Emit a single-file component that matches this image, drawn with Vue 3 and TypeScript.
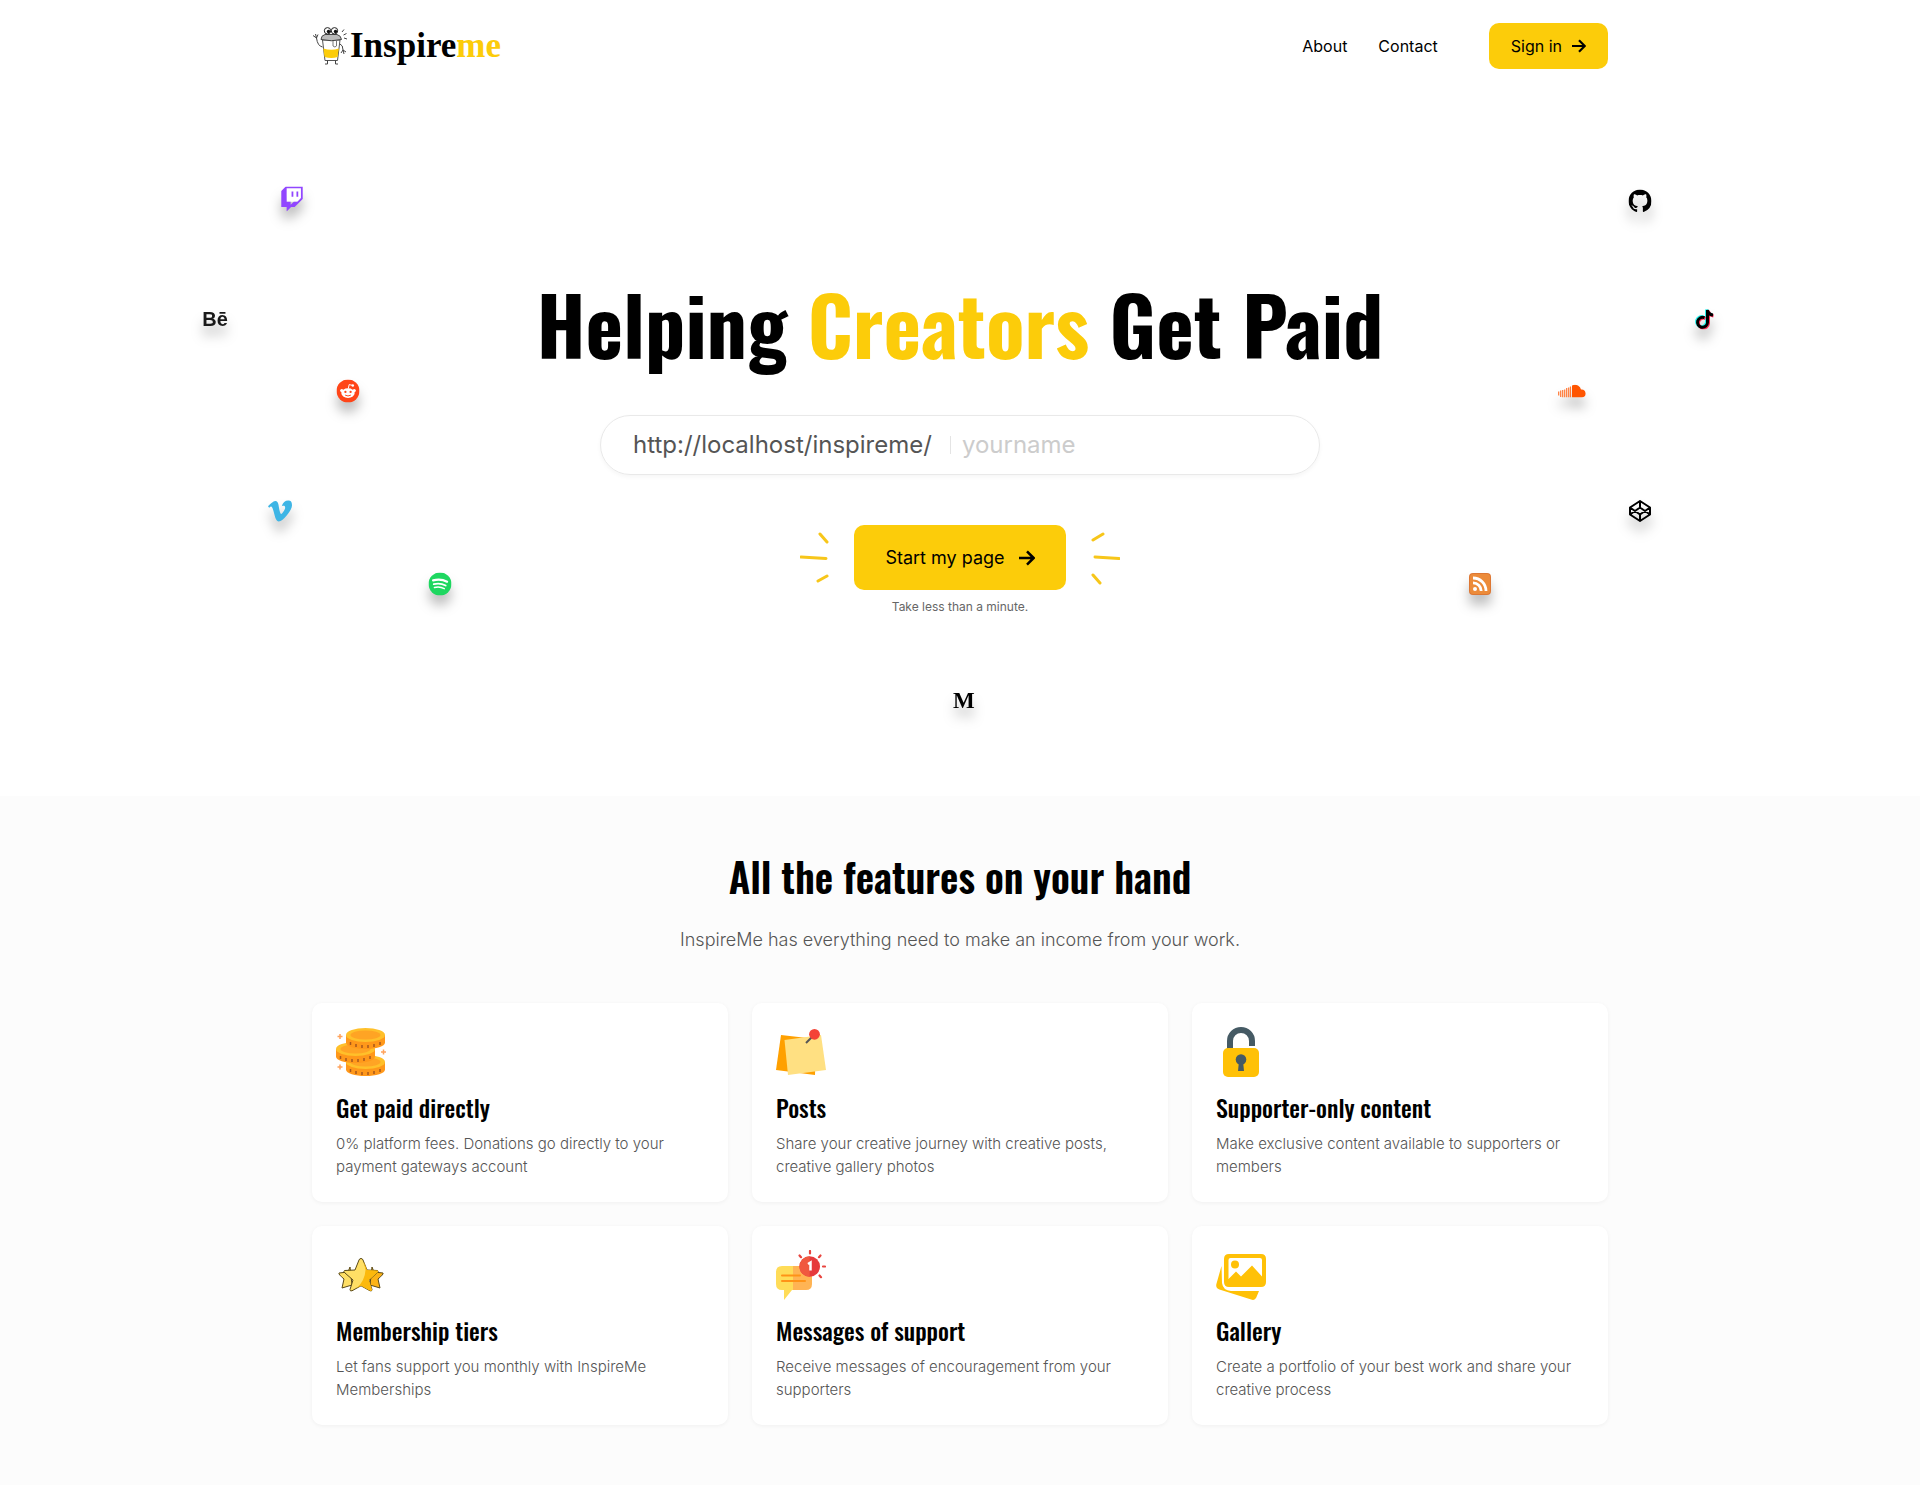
<script setup lang="ts">
import { ref } from 'vue'

interface Brand {
  name: string
  x: number
  y: number
}

interface Feature {
  icon: string
  title: string
  text: string
}

const pageName = ref('')

// x is the centre in thousandths of the hero's width, y the centre in pixels from its top
const brands: Brand[] = [
  { name: 'twitch', x: 152, y: 107 },
  { name: 'behance', x: 112, y: 227 },
  { name: 'reddit', x: 181, y: 299 },
  { name: 'vimeo', x: 146, y: 419 },
  { name: 'spotify', x: 229, y: 492 },
  { name: 'github', x: 854, y: 109 },
  { name: 'tiktok', x: 888, y: 227 },
  { name: 'soundcloud', x: 819, y: 299 },
  { name: 'codepen', x: 854, y: 419 },
  { name: 'rss', x: 771, y: 492 },
  { name: 'medium', x: 502, y: 609 },
]

const features: Feature[] = [
  { icon: 'coins', title: 'Get paid directly', text: '0% platform fees. Donations go directly to your payment gateways account' },
  { icon: 'notes', title: 'Posts', text: 'Share your creative journey with creative posts, creative gallery photos' },
  { icon: 'lock', title: 'Supporter-only content', text: 'Make exclusive content available to supporters or members' },
  { icon: 'stars', title: 'Membership tiers', text: 'Let fans support you monthly with InspireMe Memberships' },
  { icon: 'message', title: 'Messages of support', text: 'Receive messages of encouragement from your supporters' },
  { icon: 'gallery', title: 'Gallery', text: 'Create a portfolio of your best work and share your creative process' },
]

const coins = [
  { x: 10, y: 28 },
  { x: 0, y: 15 },
  { x: 10, y: 1 },
]
</script>

<template>
  <div class="page">
    <header class="container header">
      <a href="#" class="logo" aria-label="Inspireme">
        <svg class="mascot" viewBox="0 0 36 40" aria-hidden="true">
          <path d="M10.500 14l2.500 20.500h12.500L28 14z" fill="#fff" stroke="#555" />
          <path d="M11.300 22.500q8 2.500 15.500 0l-1.200 8.500q-6 2-13 0z" fill="#fccc0a" />
          <path d="M9 13.500q0-4 4-5h12q4 1 4.500 5q-10 2.500-20.500 0z" fill="#bbb" stroke="#444" />
          <circle cx="15.500" cy="4.800" r="3.200" fill="#fff" stroke="#222" />
          <circle cx="22.500" cy="4.800" r="3.200" fill="#fff" stroke="#222" />
          <circle cx="16.500" cy="5.500" r="1.700" fill="#111" />
          <circle cx="23.500" cy="5.500" r="1.700" fill="#111" />
          <path d="M21 15v5q2 2 3.500 0v-5" fill="#fff" stroke="#777" />
          <path d="M10.500 21q-5-1-6-9M4.500 12L1 9.500M4.500 12l-1-4M4.500 12L6 8.500M28 18q3 1 3 6l3 2M31 24l1 4M31 24l-2 3" fill="none" stroke="#444" />
          <path d="M15.500 34.500v3.500h-2.500M23.500 34.500v3.500h2.500M30 6l2-2.500M31.500 9l3-1.500M32 12l3 1" fill="none" stroke="#444" />
        </svg>
        <span class="wordmark">Inspire<em>me</em></span>
      </a>
      <nav class="nav">
        <a href="#">About</a>
        <a href="#">Contact</a>
        <a href="#" class="signin">
          Sign in
          <svg viewBox="0 0 14 14" width="14" height="14" aria-hidden="true">
            <path d="M0 7h12.500M7 1.200L12.800 7L7 12.800" fill="none" stroke="#000" stroke-width="2.200" />
          </svg>
        </a>
      </nav>
    </header>

    <main>
      <section class="hero">
        <h1>Helping <span>Creators</span> Get Paid</h1>
        <form class="claim" @submit.prevent>
          <div class="field">
            <label for="page-name">http://localhost/inspireme/</label>
            <span class="divider"></span>
            <input id="page-name" v-model="pageName" type="text" placeholder="yourname" />
          </div>
          <div class="action">
            <svg class="rays" viewBox="0 0 30 54" aria-hidden="true">
              <path d="M20 3l7 8M1 26l25 1.500M18 50l9-5" />
            </svg>
            <button type="submit">
              Start my page
              <svg viewBox="0 0 14 14" width="16" height="16" aria-hidden="true">
                <path d="M0 7h12.500M7 1.200L12.800 7L7 12.800" fill="none" stroke="#000" stroke-width="2.200" />
              </svg>
            </button>
            <svg class="rays" viewBox="0 0 30 54" aria-hidden="true">
              <path d="M3 9l10-6M5 26l24 1.500M3 44l7 8" />
            </svg>
          </div>
          <small>Take less than a minute.</small>
        </form>

        <span
          v-for="b in brands"
          :key="b.name"
          class="brand"
          :style="{ left: b.x / 10 + '%', top: b.y + 'px' }"
          aria-hidden="true"
        >
          <svg v-if="b.name === 'twitch'" width="22" height="25" viewBox="0 0 2400 2800">
            <path d="M500 200h1700v1200l-400 300h-1200z" fill="#fff" />
            <path fill="#9146ff" d="M500 0L0 500v1800h600v500l500-500h400l900-900V0H500zm1700 1300l-400 400h-400l-350 350v-350H600V200h1600v1100zM1700 550h200v600h-200zM1150 550h200v600h-200z" />
          </svg>
          <span v-else-if="b.name === 'behance'" class="be">Bē</span>
          <svg v-else-if="b.name === 'reddit'" width="23" height="23" viewBox="0 0 24 24">
            <circle cx="12" cy="12" r="12" fill="#ff4518" />
            <path d="M12.300 9.500l.9-4.200 3 .7" fill="none" stroke="#fff" />
            <circle cx="17" cy="6.300" r="1.300" fill="#fff" />
            <circle cx="5.500" cy="11.500" r="1.700" fill="#fff" />
            <circle cx="18.500" cy="11.500" r="1.700" fill="#fff" />
            <ellipse cx="12" cy="14.200" rx="7" ry="5" fill="#fff" />
            <circle cx="9.300" cy="13" r="1.200" fill="#ff4518" />
            <circle cx="14.700" cy="13" r="1.200" fill="#ff4518" />
            <path d="M9 16.300q3 1.800 6 0" fill="none" stroke="#ff4518" />
          </svg>
          <svg v-else-if="b.name === 'vimeo'" width="24" height="24" viewBox="0 0 24 24">
            <path fill="#3eb5e5" d="M23.977 6.416c-.105 2.338-1.739 5.543-4.894 9.609-3.268 4.247-6.026 6.370-8.290 6.370-1.409 0-2.578-1.294-3.553-3.881L5.322 11.400C4.603 8.816 3.834 7.522 3.010 7.522c-.179 0-.806.378-1.881 1.132L0 7.197c1.185-1.044 2.351-2.084 3.501-3.128C5.080 2.701 6.266 1.984 7.055 1.910c1.867-.180 3.016 1.100 3.447 3.838.465 2.953.789 4.789.971 5.507.539 2.450 1.131 3.674 1.776 3.674.502 0 1.256-.796 2.265-2.385 1.004-1.589 1.540-2.797 1.612-3.628.144-1.371-.395-2.061-1.614-2.061-.574 0-1.167.121-1.777.391 1.186-3.868 3.434-5.757 6.762-5.637 2.473.060 3.628 1.664 3.480 4.807z" />
          </svg>
          <svg v-else-if="b.name === 'spotify'" width="23" height="23" viewBox="0 0 24 24">
            <circle cx="12" cy="12" r="12" fill="#1ed760" />
            <path d="M4.800 8.200q8-2.200 14.600 1.400" fill="none" stroke="#fff" stroke-width="2.300" stroke-linecap="round" />
            <path d="M5.500 12.200q6.500-1.800 12.400 1.400" fill="none" stroke="#fff" stroke-width="1.900" stroke-linecap="round" />
            <path d="M6.200 15.700q5.500-1.400 10.300 1.200" fill="none" stroke="#fff" stroke-width="1.500" stroke-linecap="round" />
          </svg>
          <svg v-else-if="b.name === 'github'" width="23" height="23" viewBox="0 0 16 16">
            <path d="M8 0C3.580 0 0 3.580 0 8c0 3.540 2.290 6.530 5.470 7.590.4.070.55-.17.55-.38 0-.19-.01-.82-.01-1.490-2.010.37-2.530-.49-2.690-.94-.09-.23-.48-.94-.82-1.130-.28-.15-.68-.52-.01-.53.63-.01 1.080.58 1.230.82.72 1.210 1.870.87 2.330.66.07-.52.28-.87.51-1.070-1.780-.2-3.640-.89-3.640-3.950 0-.87.31-1.590.82-2.150-.08-.2-.36-1.020.08-2.120 0 0 .67-.21 2.200.82.64-.18 1.320-.27 2-.27s1.360.09 2 .27c1.530-1.040 2.200-.82 2.200-.82.44 1.100.16 1.920.08 2.120.51.56.82 1.270.82 2.150 0 3.070-1.870 3.750-3.650 3.950.29.25.54.73.54 1.480 0 1.070-.01 1.930-.01 2.200 0 .21.15.46.55.38A8.010 8.010 0 0 0 16 8c0-4.420-3.580-8-8-8z" />
          </svg>
          <svg v-else-if="b.name === 'tiktok'" width="20" height="21" viewBox="0 0 20 21">
            <g fill="none" stroke-width="3">
              <path stroke="#25f4ee" d="M8.500 8.500A5 5 0 1 0 11.500 14V1q.5 4 5 5" />
              <path stroke="#fe2c55" d="M10.500 10A5 5 0 1 0 13.500 15V2.500q.5 4 5 5" />
              <path stroke="#000" d="M9.500 9.200A5 5 0 1 0 12.500 14V1.500q.5 4.500 5.500 5" />
            </g>
          </svg>
          <svg v-else-if="b.name === 'soundcloud'" width="28" height="13" viewBox="0 0 28 13">
            <path d="M14 1q3-1.500 6 0q2.500 1.500 3 4a4 4 0 1 1 1 8H14z" fill="#ff5500" />
            <path d="M.7 7v4M2.700 6v6.500M4.700 5.500V13M6.700 5V13M8.700 3.500V13M10.700 3V13M12.500 2V13" stroke="#ff7733" stroke-width="1.200" />
          </svg>
          <svg v-else-if="b.name === 'codepen'" width="24" height="24" viewBox="0 0 24 24" fill="none" stroke="#000" stroke-width="2" stroke-linejoin="round">
            <path d="M12 2l10 6.500v7L12 22 2 15.500v-7zM12 22v-6.500M22 8.500l-10 7-10-7M2 15.500l10-7 10 7M12 2v6.500" />
          </svg>
          <svg v-else-if="b.name === 'rss'" width="22" height="22" viewBox="0 0 22 22">
            <rect width="22" height="22" rx="4" fill="#dd7733" />
            <rect x="1" y="1" width="20" height="20" rx="3" fill="#ec8b3a" />
            <circle cx="6" cy="16" r="2" fill="#fff" />
            <path d="M4 9.800a8.200 8.200 0 0 1 8.200 8.200M4 5a13 13 0 0 1 13 13" fill="none" stroke="#fff" stroke-width="2.800" />
          </svg>
          <span v-else class="em">M</span>
        </span>
      </section>

      <section class="features">
        <div class="container">
          <h2>All the features on your hand</h2>
          <p class="lead">InspireMe has everything need to make an income from your work.</p>
          <div class="grid">
            <article v-for="f in features" :key="f.title" class="card">
              <svg class="picture" viewBox="0 0 50 50" aria-hidden="true">
                <g v-if="f.icon === 'coins'">
                  <g v-for="c in coins" :key="c.y" :transform="`translate(${c.x} ${c.y})`">
                    <path d="M0 7v7.500c0 4 9 6.500 19.500 6.500s19.500-2.500 19.500-6.500V7z" fill="#ff981a" />
                    <ellipse cx="19.500" cy="7" rx="19.500" ry="7" fill="#ffc02a" />
                    <ellipse cx="19.500" cy="7" rx="15" ry="4.500" fill="#ffa424" />
                    <path d="M4.500 14v3M10 16v3M16 17v3M22 17v3M28 16v3M34 14v3" stroke="#a8571c" stroke-width="1.500" />
                  </g>
                  <path d="M4 7v5M1.500 9.500h5M47.500 22.500v5M45 25h5M4 37.500v5M1.500 40h5" stroke="#ffa35c" stroke-width="1.500" />
                </g>
                <g v-else-if="f.icon === 'notes'">
                  <path d="M5 8l35 4-1 36L0 43z" fill="#ffa000" />
                  <path d="M8.500 13L45 8l5 35-38 5z" fill="#ffe082" />
                  <path d="M30 16l6-6" stroke="#555" stroke-width="2" />
                  <circle cx="38.500" cy="7.300" r="5.400" fill="#f44336" />
                </g>
                <g v-else-if="f.icon === 'lock'">
                  <path d="M14 23v-9a11 11 0 0 1 22 0v5" fill="none" stroke="#455a64" stroke-width="6" />
                  <rect x="7" y="21" width="36" height="29" rx="5" fill="#ffc107" />
                  <circle cx="25" cy="32.500" r="5.300" fill="#455a64" />
                  <path d="M23 34h4l1 10h-6z" fill="#455a64" />
                </g>
                <g v-else-if="f.icon === 'stars'" stroke="#5b4a18" stroke-linejoin="round">
                  <path d="M14 17l-2 5-9 1q-1 1 5 6l-2 9 10-3z" fill="#ffdf65" />
                  <path d="M36 17l2 5 9 1q1 1-5 6l2 9-10-3z" fill="#fcb316" />
                  <path d="M25 8.500q1.500 0 2 1.500l4 10 10.500.5q1.500 1-.5 2.500L33 30l3 9.500q0 2-2 1.300l-9-5-9 5q-2 .7-2-1.300L17 30l-8-7q-2-1.500-.5-2.500L19 20l4-10q.5-1.500 2-1.500z" fill="#ffdf65" />
                  <path d="M27.500 11l3.500 9 10.500.5q1.500 1-.5 2.500L33 30l3 9.500q0 2-2 1.300l-9-5-4 2.200q8-8 8.500-18z" fill="#fcb90c" stroke="none" />
                </g>
                <g v-else-if="f.icon === 'message'">
                  <path d="M6 16h11v24l-1 0-8 10V40H6q-6 0-6-6V22q0-6 6-6z" fill="#ffdc58" />
                  <path d="M17 16h13q6 0 6 6v12q0 6-6 6H17z" fill="#ffb454" />
                  <path d="M6 25.500h18M6 31h23" stroke="#ff9317" stroke-width="2" stroke-linecap="round" />
                  <circle cx="33.700" cy="16.500" r="10.300" fill="#e63a3c" />
                  <path d="M33.700 6.200a10.300 10.300 0 0 0 0 20.600z" fill="#f0583f" />
                  <path d="M32 14l2.500-1.500V20.500" fill="none" stroke="#fff" stroke-width="2.500" />
                  <path d="M34 1v2.500M23.500 5.500l1.500 1.700M44.500 5.500L43 7.200M47 16.500h2M43.500 25.500l1.500 1.700" stroke="#e8453f" stroke-width="2.200" stroke-linecap="round" />
                </g>
                <g v-else fill="#ffc107">
                  <path d="M5.500 16L.4 34q-1 4 3 5.500L36 49.800q3 .7 4.300-2.300L43 41H15q-8-.5-9-8z" />
                  <path fill-rule="evenodd" d="M13 4h32q5 0 5 5v23q0 5-5 5H13q-5 0-5-5V9q0-5 5-5zM12.500 10v19l7.500-7.500 5 5L36 15.500l10 11V10q0-2-2-2H14.500q-2 0-2 2z" />
                  <circle cx="19" cy="14.500" r="4" />
                </g>
              </svg>
              <h3>{{ f.title }}</h3>
              <p>{{ f.text }}</p>
            </article>
          </div>
        </div>
      </section>
    </main>
  </div>
</template>

<style>
body {
  margin: 0;
  background: #fff;
}
</style>

<style scoped>
.page {
  color: #000;
  font-family: Inter, 'Liberation Sans', sans-serif;
  font-size: 16px;
}

.container {
  box-sizing: border-box;
  max-width: 1320px;
  margin: 0 auto;
  padding: 0 12px;
}

a {
  color: inherit;
  text-decoration: none;
}

h1,
h2,
h3 {
  margin: 0;
  font-family: Oswald, 'Liberation Sans Narrow', 'Liberation Sans', sans-serif;
}

.header {
  display: flex;
  align-items: center;
  justify-content: space-between;
  height: 92px;
}

.logo {
  display: flex;
  align-items: center;
  gap: 2px;
}

.mascot {
  width: 36px;
  height: 40px;
}

.wordmark {
  font-family: 'Liberation Serif', serif;
  font-size: 35px;
  font-weight: 700;
  line-height: 40px;
}

.wordmark em {
  color: #fccc0a;
  font-style: normal;
}

.nav {
  display: flex;
  align-items: center;
  gap: 31px;
}

.signin {
  display: flex;
  align-items: center;
  gap: 10px;
  height: 46px;
  margin-left: 20px;
  padding: 0 22px;
  border-radius: 10px;
  background: #fccc0a;
}

.hero {
  position: relative;
  padding: 181px 12px 180px;
  text-align: center;
}

h1 {
  font-size: 80px;
  font-weight: 700;
  line-height: 100px;
}

h1 span {
  color: #fccc0a;
}

.claim {
  display: flex;
  flex-direction: column;
  align-items: center;
}

.field {
  display: flex;
  align-items: center;
  box-sizing: border-box;
  width: 100%;
  max-width: 720px;
  height: 60px;
  margin-top: 42px;
  padding: 0 32px;
  border: 1px solid #e9e9e9;
  border-radius: 30px;
  box-shadow: 0 2px 4px rgba(0, 0, 0, 0.04);
  color: #555;
  font-size: 24px;
  line-height: 30px;
}

.divider {
  width: 1px;
  height: 18px;
  margin: 0 11px 0 18px;
  background: #e4e4e4;
}

.field input {
  flex: 1;
  min-width: 0;
  height: 30px;
  padding: 0;
  border: 0;
  outline: 0;
  background: none;
  color: #555;
  font: inherit;
}

.field input::placeholder {
  color: #ccc;
  opacity: 1;
}

.action {
  display: flex;
  align-items: center;
  gap: 24px;
  margin-top: 50px;
}

.action button {
  display: flex;
  align-items: center;
  gap: 14px;
  height: 65px;
  padding: 0 31px;
  border: 0;
  border-radius: 10px;
  background: #fccc0a;
  color: #000;
  font: inherit;
  font-size: 18px;
}

.rays {
  width: 30px;
  height: 54px;
  fill: none;
  stroke: #f7c61a;
  stroke-width: 3;
  stroke-linecap: round;
}

small {
  margin-top: 8px;
  color: #666;
  font-size: 12px;
  line-height: 18px;
}

.brand {
  position: absolute;
  display: flex;
  transform: translate(-50%, -50%);
  filter: drop-shadow(0 10px 6px rgba(0, 0, 0, 0.25));
}

.be {
  font-family: 'Liberation Sans', sans-serif;
  font-size: 20px;
  font-weight: 700;
  color: #1a1a1a;
}

.em {
  font-family: 'Liberation Serif', serif;
  font-size: 23px;
  font-weight: 700;
}

.features {
  padding: 53px 0 60px;
  background: #fcfcfc;
}

h2 {
  font-size: 40px;
  font-weight: 600;
  line-height: 54px;
  text-align: center;
}

.lead {
  margin: 23px 0 49px;
  color: #555;
  font-size: 18px;
  font-weight: 300;
  line-height: 28px;
  text-align: center;
}

.grid {
  display: grid;
  grid-template-columns: repeat(3, 1fr);
  gap: 24px;
}

.card {
  padding: 24px;
  border-radius: 10px;
  background: #fff;
  box-shadow: 0 1px 4px rgba(0, 0, 0, 0.05);
}

.picture {
  display: block;
  width: 50px;
  height: 50px;
}

h3 {
  margin: 14px 0 9px;
  font-size: 24px;
  font-weight: 500;
  line-height: 32px;
}

.card p {
  margin: 0;
  color: #555;
  font-size: 15px;
  font-weight: 300;
  line-height: 23px;
}
</style>
